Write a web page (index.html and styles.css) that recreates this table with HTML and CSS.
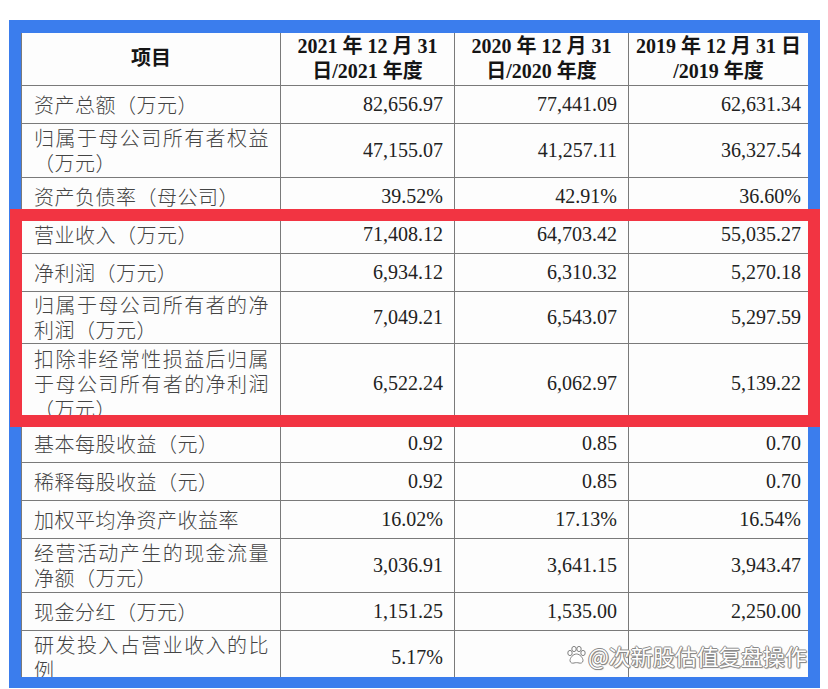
FILE: index.html
```html
<!DOCTYPE html>
<html lang="zh-CN">
<head>
<meta charset="utf-8">
<title>主要财务数据</title>
<link rel="stylesheet" href="styles.css">
</head>
<body>
<div class="page">
  <div class="frame">
    <div class="sheet">
      <table class="fin">
        <colgroup><col class="c1"><col class="c2"><col class="c3"><col class="c4"></colgroup>
        <thead>
          <tr class="h52">
            <th>项目</th>
            <th>2021 年 12 月 31<br>日/2021 年度</th>
            <th>2020 年 12 月 31<br>日/2020 年度</th>
            <th>2019 年 12 月 31 日<br>/2019 年度</th>
          </tr>
        </thead>
        <tbody>
          <tr class="h38"><td class="lbl">资产总额（万元）</td><td class="num">82,656.97</td><td class="num">77,441.09</td><td class="num">62,631.34</td></tr>
          <tr class="h54"><td class="lbl">归属于母公司所有者权益（万元）</td><td class="num">47,155.07</td><td class="num">41,257.11</td><td class="num">36,327.54</td></tr>
          <tr class="h38"><td class="lbl">资产负债率（母公司）</td><td class="num">39.52%</td><td class="num">42.91%</td><td class="num">36.60%</td></tr>
          <tr class="h38"><td class="lbl">营业收入（万元）</td><td class="num">71,408.12</td><td class="num">64,703.42</td><td class="num">55,035.27</td></tr>
          <tr class="h38"><td class="lbl">净利润（万元）</td><td class="num">6,934.12</td><td class="num">6,310.32</td><td class="num">5,270.18</td></tr>
          <tr class="h52"><td class="lbl">归属于母公司所有者的净利润（万元）</td><td class="num">7,049.21</td><td class="num">6,543.07</td><td class="num">5,297.59</td></tr>
          <tr class="h81"><td class="lbl">扣除非经常性损益后归属于母公司所有者的净利润（万元）</td><td class="num">6,522.24</td><td class="num">6,062.97</td><td class="num">5,139.22</td></tr>
          <tr class="h38"><td class="lbl">基本每股收益（元）</td><td class="num">0.92</td><td class="num">0.85</td><td class="num">0.70</td></tr>
          <tr class="h38"><td class="lbl">稀释每股收益（元）</td><td class="num">0.92</td><td class="num">0.85</td><td class="num">0.70</td></tr>
          <tr class="h38"><td class="lbl">加权平均净资产收益率</td><td class="num">16.02%</td><td class="num">17.13%</td><td class="num">16.54%</td></tr>
          <tr class="h54"><td class="lbl">经营活动产生的现金流量净额（万元）</td><td class="num">3,036.91</td><td class="num">3,641.15</td><td class="num">3,943.47</td></tr>
          <tr class="h38"><td class="lbl">现金分红（万元）</td><td class="num">1,151.25</td><td class="num">1,535.00</td><td class="num">2,250.00</td></tr>
          <tr class="h54"><td class="lbl">研发投入占营业收入的比例</td><td class="num">5.17%</td><td class="num"></td><td class="num"></td></tr>
        </tbody>
      </table>
    </div>
  </div>
  <div class="highlight"></div>
  <div class="watermark">
    <svg class="paw" width="20" height="20" viewBox="0 0 20 20">
      <ellipse cx="4" cy="8" rx="2.2" ry="2.6" />
      <ellipse cx="8" cy="4" rx="2.2" ry="2.6" />
      <ellipse cx="13" cy="4" rx="2.2" ry="2.6" />
      <ellipse cx="17" cy="8" rx="2.2" ry="2.6" />
      <path d="M10.5 9 C7 9 4 13 4 15.5 C4 18 6.5 18.5 8 18 C9.5 17.5 11.5 17.5 13 18 C14.5 18.5 17 18 17 15.5 C17 13 14 9 10.5 9 Z" />
    </svg>
    <span class="wm-text">@次新股估值复盘操作</span>
  </div>
</div>
</body>
</html>
```
FILE: styles.css
```css
html, body {
  margin: 0;
  padding: 0;
  background: #ffffff;
}

.page {
  position: relative;
  width: 828px;
  height: 689px;
  padding: 20px 0 0 9px;
  box-sizing: border-box;
}

.frame {
  width: 811px;
  height: 668px;
  background: #3b7ded;
  padding: 13px 12px 11px 12px;
  box-sizing: border-box;
}

.sheet {
  background: #fdfdfd;
  height: 100%;
  overflow: hidden;
}

.fin {
  border-collapse: collapse;
  table-layout: fixed;
  width: 787px;
}

.c1 { width: 259px; }
.c2 { width: 174px; }
.c3 { width: 174px; }
.c4 { width: 180px; }

.fin th,
.fin td {
  border: 1px solid #7a7a7a;
  padding: 0 11px 0 12px;
  vertical-align: middle;
}

.fin th {
  border-top: none;
  font-family: "Liberation Serif", "Noto Sans CJK SC", serif;
  font-size: 20px;
  font-weight: bold;
  line-height: 25px;
  color: #151515;
  text-align: center;
  padding: 0 4px;
}

.fin td.lbl {
  font-family: "Noto Sans CJK SC", sans-serif;
  font-size: 20px;
  font-weight: 300;
  letter-spacing: 0.5px;
  line-height: 25px;
  color: #444;
  text-align: justify;
  text-align-last: left;
}

.fin td.num {
  font-family: "Liberation Serif", serif;
  font-size: 20px;
  line-height: 25px;
  color: #222;
  text-align: right;
}

.fin td.num:last-child {
  padding-right: 7px;
}

.h38 { height: 38px; }
.h52 { height: 52px; }
.h54 { height: 54px; }
.h81 { height: 81px; }

.highlight {
  position: absolute;
  left: 10px;
  top: 209px;
  width: 810px;
  height: 218px;
  border: 12px solid #f23442;
  box-sizing: border-box;
}

.watermark {
  position: absolute;
  left: 566px;
  top: 642px;
  display: flex;
  align-items: center;
  gap: 2px;
}

.paw {
  fill: #ffffff;
  stroke: #808080;
  stroke-width: 1;
}

.wm-text {
  font-family: "Noto Sans CJK SC", sans-serif;
  font-size: 22px;
  line-height: 26px;
  color: #ffffff;
  text-shadow: 1px 0 0 #8a8a8a, -1px 0 0 #8a8a8a, 0 1px 0 #8a8a8a, 0 -1px 0 #8a8a8a, 1px 1px 1px #777;
}
```
